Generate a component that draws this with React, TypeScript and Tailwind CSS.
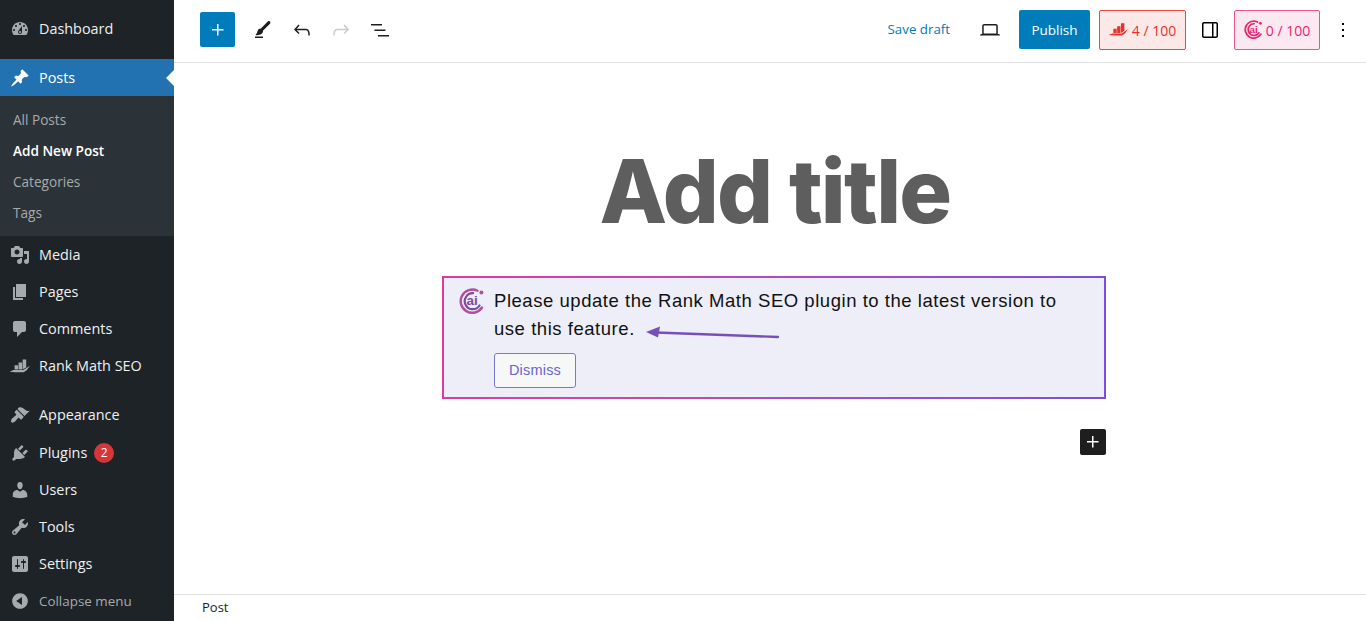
import React from 'react';

const dash = {
  dashboard: 'M3.76 16h12.48c1.1-1.37 1.76-3.11 1.76-5 0-4.42-3.58-8-8-8s-8 3.58-8 8c0 1.89.66 3.63 1.76 5zM10 4c.55 0 1 .45 1 1s-.45 1-1 1-1-.45-1-1 .45-1 1-1zM6 6c.55 0 1 .45 1 1s-.45 1-1 1-1-.45-1-1 .45-1 1-1zm8 0c.55 0 1 .45 1 1s-.45 1-1 1-1-.45-1-1 .45-1 1-1zm-5.37 5.55L12 7v6c0 1.1-.9 2-2 2s-2-.9-2-2c0-.57.24-1.08.63-1.45zM4 10c.55 0 1 .45 1 1s-.45 1-1 1-1-.45-1-1 .45-1 1-1zm12 0c.55 0 1 .45 1 1s-.45 1-1 1-1-.45-1-1 .45-1 1-1zm-5 3c0-.55-.45-1-1-1s-1 .45-1 1 .45 1 1 1 1-.45 1-1z',
  pin: 'M10.44 3.02l1.82-1.82 6.36 6.35-1.83 1.82c-1.05-.68-2.48-.57-3.41.36l-.75.75c-.92.93-1.04 2.35-.35 3.41l-1.83 1.82-2.41-2.41-2.8 2.79c-.42.42-3.38 2.71-3.8 2.29s1.86-3.39 2.28-3.81l2.79-2.79L4.1 9.36l1.83-1.82c1.05.69 2.48.57 3.4-.36l.75-.75c.93-.92 1.05-2.35.36-3.41z',
  media: 'M13 11V4c0-.55-.45-1-1-1h-1.67L9 1H5L3.67 3H2c-.55 0-1 .45-1 1v7c0 .55.45 1 1 1h10c.55 0 1-.45 1-1zM7 4.5c1.38 0 2.5 1.12 2.5 2.5S8.38 9.5 7 9.5 4.5 8.38 4.5 7 5.62 4.5 7 4.5zM14 6h5v10.5c0 1.38-1.12 2.5-2.5 2.5S14 17.88 14 16.5s1.12-2.5 2.5-2.5c.17 0 .34.02.5.05V9h-3V6zm-4 8.05V13h2v3.5c0 1.38-1.12 2.5-2.5 2.5S7 17.88 7 16.5 8.12 14 9.5 14c.17 0 .34.02.5.05z',
  pages: 'M6 15V2h10v13H6zm-1 1h8v2H3V5h2v11z',
  comments: 'M5 2h9c1.1 0 2 .9 2 2v7c0 1.1-.9 2-2 2h-2l-5 5v-5H5c-1.1 0-2-.9-2-2V4c0-1.1.9-2 2-2z',
  rank: 'M4.6 9.2h3.5v4.4H4.6zM8.6 6.6h3.5v7H8.6zM12.6 3.4h3.6v8l-3.6 2.2zM-.4 15.8l3.8-1.7h10l3-2 3.6-2.4-3.3 4.5-3 2H4.8z',
  appearance: 'M14.48 11.06L7.41 3.99l1.5-1.5c.5-.56 2.3-.47 3.51.32 1.21.8 1.43 1.28 2.91 2.1 1.18.64 2.45 1.26 4.45.85zm-.71.71L6.7 4.7 4.93 6.47c-.39.39-.39 1.02 0 1.41l1.06 1.06c.39.39.39 1.03 0 1.42-.6.6-1.43 1.11-2.21 1.69-.35.26-.7.53-1.01.84C1.43 13.23.78 15.53 1.18 17c.4 1.4 2.65.87 4.16-.64.31-.31.58-.66.84-1.01.58-.78 1.09-1.61 1.69-2.21.39-.39 1.03-.39 1.42 0l1.06 1.06c.39.39 1.02.39 1.41 0z',
  plugins: 'M13.11 4.36L9.87 7.6 8 5.73l3.24-3.24c.35-.34 1.05-.2 1.56.32.52.51.66 1.21.31 1.55zm-8 1.77l.91-1.12 9.01 9.01-1.19.84c-.71.71-2.63 1.16-3.82 1.16H6.14L4.9 17.26c-.59.59-1.54.59-2.12 0-.59-.58-.59-1.53 0-2.12l1.24-1.24v-3.88c0-1.13.4-3.19 1.09-3.89zm7.26 3.97l3.24-3.24c.34-.35 1.04-.21 1.55.31.52.51.66 1.21.31 1.55l-3.24 3.25z',
  users: 'M10 9.25c-2.27 0-2.73-3.44-2.73-3.44C7 4.02 7.82 2 9.97 2c2.16 0 2.98 2.02 2.71 3.81 0 0-.41 3.44-2.68 3.44zm0 2.57L12.72 10c2.39 0 4.52 2.33 4.52 4.53v2.49s-3.65 1.13-7.24 1.13c-3.65 0-7.24-1.13-7.24-1.13v-2.49c0-2.25 1.94-4.48 4.47-4.48z',
  tools: 'M16.68 9.77c-1.34 1.34-3.3 1.67-4.95.99l-5.41 6.52c-.99.99-2.59.99-3.58 0s-.99-2.59 0-3.57l6.52-5.42c-.68-1.65-.35-3.61.99-4.95 1.28-1.28 3.12-1.62 4.72-1.06l-2.89 2.89 2.82 2.82 2.86-2.87c.53 1.58.18 3.39-1.08 4.65zM3.81 16.21c.4.39 1.04.39 1.43 0 .4-.4.4-1.04 0-1.43-.39-.4-1.03-.4-1.43 0-.39.39-.39 1.03 0 1.43z',
  settings: 'M18 16V4c0-1.1-.9-2-2-2H4c-1.1 0-2 .9-2 2v12c0 1.1.9 2 2 2h12c1.1 0 2-.9 2-2zM8 11h1c.55 0 1 .45 1 1s-.45 1-1 1H8v1.5c0 .28-.22.5-.5.5s-.5-.22-.5-.5V13H6c-.55 0-1-.45-1-1s.45-1 1-1h1V5.5c0-.28.22-.5.5-.5s.5.22.5.5V11zm5-2h-1c-.55 0-1-.45-1-1s.45-1 1-1h1V5.5c0-.28.22-.5.5-.5s.5.22.5.5V7h1c.55 0 1 .45 1 1s-.45 1-1 1h-1v5.5c0 .28-.22.5-.5.5s-.5-.22-.5-.5V9z',
  collapse: 'M10 2.16c4.33 0 7.84 3.51 7.84 7.84s-3.51 7.84-7.84 7.84S2.16 14.33 2.16 10 5.71 2.16 10 2.16zm2 11.72V6.12L6.18 9.97z',
};

const Dash = ({ d, className = 'text-[#a7aaad]' }: { d: string; className?: string }) => (
  <svg viewBox="0 0 20 20" fill="currentColor" className={`w-5 h-5 shrink-0 overflow-visible ${className}`}>
    <path d={d} />
  </svg>
);

const G = ({ d, className = 'text-[#1e1e1e]' }: { d: string; className?: string }) => (
  <svg viewBox="0 0 24 24" fill="currentColor" className={`w-6 h-6 shrink-0 ${className}`}>
    <path d={d} />
  </svg>
);

const MenuItem = ({ icon, label, children, muted }: { icon: string; label: string; children?: React.ReactNode; muted?: boolean }) => (
  <div className="h-[37px] flex items-center pl-[9.5px]">
    <Dash d={icon} />
    <span className={`ml-[9.5px] ${muted ? 'text-[13.4px] text-[#a7aaad]' : 'text-[#f0f0f1]'}`}>{label}</span>
    {children}
  </div>
);

const AiLogo = ({ size, a, b }: { size: number; a: string; b: string }) => (
  <svg width={size} height={size} viewBox="0 0 26 26" fill="none" className="shrink-0">
    <path d="M23 19.5A11.6 11.6 0 1 1 18.5 2.8" stroke={a} strokeWidth="2.4" strokeLinecap="round" />
    <path d="M20.5 17.5A8 8 0 1 1 14 5.2" stroke={b} strokeWidth="2.2" strokeLinecap="round" />
    <circle cx="22.4" cy="4.6" r="2" fill={a} />
    <text x="7.6" y="17.4" fontSize="13.5" fontWeight="700" fill={b} fontFamily="'Liberation Sans', sans-serif">ai</text>
  </svg>
);

export default function App() {
  return (
    <div className="flex h-[621px] w-[1366px] overflow-hidden bg-white font-['Open_Sans',sans-serif]">
      <aside className="w-[174px] shrink-0 bg-[#1d2327] text-[14.4px] leading-[18px] pt-[10.5px]">
        <MenuItem icon={dash.dashboard} label="Dashboard" />
        <div className="relative h-[37px] mt-[11.5px] flex items-center pl-[9.5px] bg-[#2271b1]">
          <Dash d={dash.pin} className="text-white" />
          <span className="ml-[9.5px] text-white">Posts</span>
          <span className="absolute right-0 top-[11px] border-y-[8px] border-r-[8px] border-y-transparent border-r-white" />
        </div>
        <div className="bg-[#2c3338] py-[8px] text-[13.6px]">
          <div className="h-[31px] flex items-center pl-[13px] text-[#a7aaad]">All Posts</div>
          <div className="h-[31px] flex items-center pl-[13px] text-white font-semibold">Add New Post</div>
          <div className="h-[31px] flex items-center pl-[13px] text-[#a7aaad]">Categories</div>
          <div className="h-[31px] flex items-center pl-[13px] text-[#a7aaad]">Tags</div>
        </div>
        <MenuItem icon={dash.media} label="Media" />
        <MenuItem icon={dash.pages} label="Pages" />
        <MenuItem icon={dash.comments} label="Comments" />
        <MenuItem icon={dash.rank} label="Rank Math SEO" />
        <div className="h-[12px]" />
        <MenuItem icon={dash.appearance} label="Appearance" />
        <div className="h-[1px]" />
        <MenuItem icon={dash.plugins} label="Plugins">
          <span className="ml-[7px] w-5 h-5 rounded-full bg-[#d63638] text-white text-[12px] flex items-center justify-center">2</span>
        </MenuItem>
        <MenuItem icon={dash.users} label="Users" />
        <MenuItem icon={dash.tools} label="Tools" />
        <MenuItem icon={dash.settings} label="Settings" />
        <MenuItem icon={dash.collapse} label="Collapse menu" muted />
      </aside>

      <main className="flex-1 flex flex-col min-w-0">
        <header className="h-[63px] shrink-0 border-b border-[#e0e0e0] flex items-center pl-[26px] pr-[11px] pb-[3px]">
          <button className="w-[35px] h-[35px] rounded-[2px] bg-[#007cba] flex items-center justify-center">
            <G d="M11 12.5V17.5H12.5V12.5H17.5V11H12.5V6H11V11H6V12.5H11Z" className="text-white" />
          </button>
          <div className="ml-[16px] flex items-center gap-[15px]">
            <G d="M4 20h8v-1.5H4V20zM18.9 3.5c-.6-.6-1.5-.6-2.1 0l-7.2 7.2c-.4-.1-.7 0-1.1.1-.5.2-1.5.7-1.9 2.2-.4 1.7-.8 2.2-1.1 2.7-.1.1-.2.3-.3.4l-.6 1.1H6c2 0 3.4-.4 4.7-1.4.8-.6 1.2-1.4 1.3-2.3 0-.3 0-.5-.1-.7L19 5.7c.5-.6.5-1.6-.1-2.2z" />
            <G d="M18.3 11.7c-.6-.6-1.4-.9-2.3-.9H6.7l2.9-3.3-1.1-1-4.5 5L8.5 16l1-1-2.7-2.7H16c.5 0 .9.2 1.3.5 1 1 1 3.4 1 4.5v.3h1.5v-.2c0-1.5 0-4.3-1.5-5.7z" />
            <G d="M15.6 6.5l-1.1 1 2.9 3.3H8c-.9 0-1.7.3-2.3.9-1.4 1.5-1.4 4.2-1.4 5.6v.2h1.5v-.3c0-1.1 0-3.5 1-4.5.3-.3.7-.5 1.3-.5h9.2L14.5 15l1.1 1.1 4.6-4.6-4.6-5z" className="text-[#cccccc]" />
            <G d="M3 6h11v1.5H3V6zm3.5 5.5h11V13h-11v-1.5zM21 17H10v1.5h11V17z" />
          </div>
          <div className="ml-auto flex items-center">
            <span className="pt-[1px] text-[13.3px] text-[#007cba]">Save draft</span>
            <G d="M20.5 16h-.7V8c0-1.1-.9-2-2-2H6.2c-1.1 0-2 .9-2 2v8h-.7c-.8 0-1.5.7-1.5 1.5h20c0-.8-.7-1.5-1.5-1.5zM5.7 8c0-.3.2-.5.5-.5h11.6c.3 0 .5.2.5.5v7.6H5.7V8z" className="ml-[28px] text-[#1e1e1e]" />
            <button className="ml-[17px] w-[71px] h-[39px] rounded-[2px] bg-[#007cba] pt-[1px] text-white text-[13.5px]">Publish</button>
            <div className="ml-[9px] w-[87px] h-[40px] rounded-[2px] border border-[#ef4444] bg-[#fde8e8] text-[#e5322d] text-[14px] flex items-center justify-center gap-[4px]">
              <svg viewBox="0 0 20 20" fill="currentColor" className="w-[19px] h-[19px] overflow-visible"><path d={dash.rank} /></svg>
              <span className="pt-[1px]">4 / 100</span>
            </div>
            <G d="M18 4H6c-1.1 0-2 .9-2 2v12c0 1.1.9 2 2 2h12c1.1 0 2-.9 2-2V6c0-1.1-.9-2-2-2zm-4 14.5H6c-.3 0-.5-.2-.5-.5V6c0-.3.2-.5.5-.5h8v13zm4.5-.5c0 .3-.2.5-.5.5h-2.5v-13H18c.3 0 .5.2.5.5v12z" className="ml-[12px]" />
            <div className="ml-[12px] w-[86px] h-[40px] rounded-[2px] border border-[#f0528a] bg-[#fce8f0] text-[#e5266f] text-[14px] flex items-center justify-center gap-[3px]">
              <AiLogo size={19} a="#e5266f" b="#e5266f" />
              <span className="pt-[1px]">0 / 100</span>
            </div>
            <G d="M13 19h-2v-2h2v2zm0-6h-2v-2h2v2zm0-6h-2V5h2v2z" className="ml-[11px]" />
          </div>
        </header>

        <div className="flex-1 min-h-0 flex flex-col items-center pl-[8px]">
          <h1 className="ml-[2px] mt-[72px] h-[141px] font-['Inter',sans-serif] font-extrabold text-[88px] leading-[112px] tracking-[-0.02em] text-[#5e5e5e]">Add title</h1>
          <div className="w-[664px]">
            <div className="p-[2px] bg-linear-to-r from-[#e0399b] to-[#7c4ddb]">
              <div className="bg-[#eeeef8] h-[119px] pl-[50px] pr-[20px] pt-[9px] relative">
                <span className="absolute left-[15px] top-[10px]">
                  <AiLogo size={26} a="#b04fa0" b="#7d4a9e" />
                </span>
                <p className="font-['Liberation_Sans',sans-serif] text-[18.5px] leading-[28px] tracking-[0.54px] text-[#111111]">
                  Please update the Rank Math SEO plugin to the latest version to use this feature.
                </p>
                <button className="mt-[10px] w-[82px] h-[35px] rounded-[3px] border border-[#7b78d0] bg-[#f6f7f7] font-['Liberation_Sans',sans-serif] text-[14.5px] tracking-[0.2px] text-[#6a66c8]">
                  Dismiss
                </button>
                {/* hand drawn arrow on the notice */}
                <svg width="134" height="16" viewBox="0 0 134 16" fill="none" className="absolute left-[202px] top-[48px]">
                  <path d="M10 6.5L132 11" stroke="#7650b8" strokeWidth="2.4" strokeLinecap="round" />
                  <path d="M0 6L14 0.5L12 11.5Z" fill="#7650b8" />
                </svg>
              </div>
            </div>
            <div className="mt-[30px] flex justify-end">
              <button className="w-[26px] h-[26px] rounded-[2px] bg-[#1e1e1e] flex items-center justify-center">
                <G d="M11 12.5V17.5H12.5V12.5H17.5V11H12.5V6H11V11H6V12.5H11Z" className="text-white" />
              </button>
            </div>
          </div>
        </div>

        <footer className="h-[27px] shrink-0 border-t border-[#e0e0e0] flex items-center pl-[28px] text-[13px] text-[#1e1e1e]">
          Post
        </footer>
      </main>
    </div>
  );
}
